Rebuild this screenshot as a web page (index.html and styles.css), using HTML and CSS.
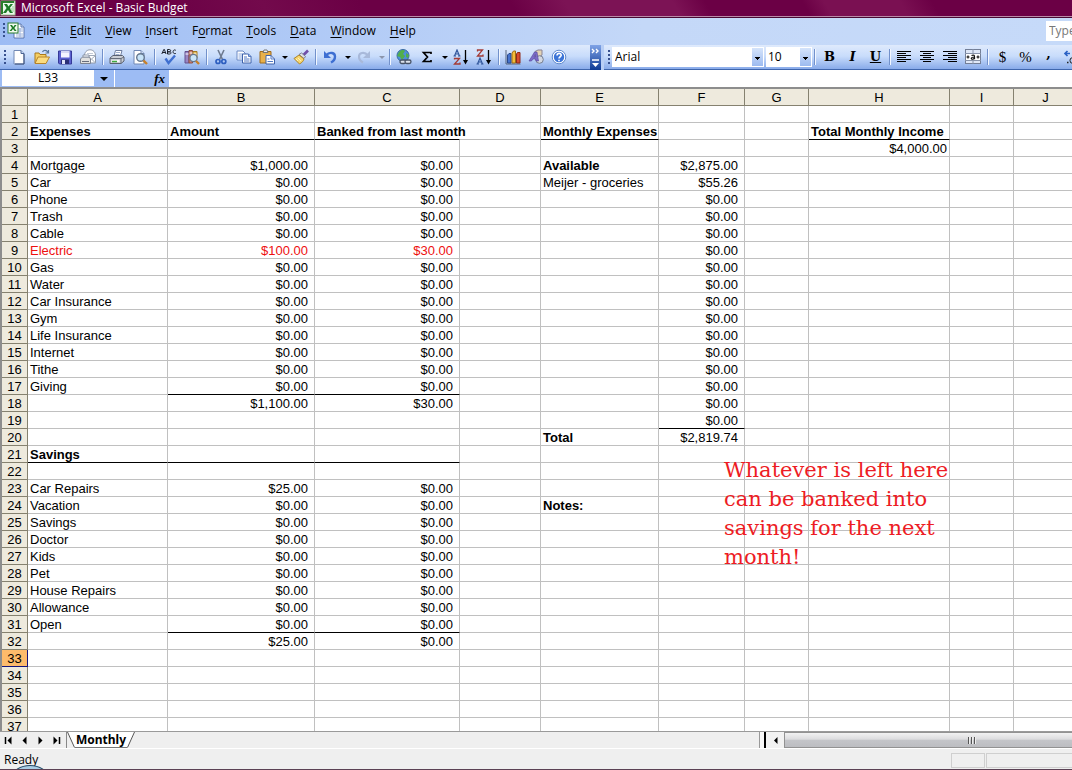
FILE: index.html
```html
<!DOCTYPE html>
<html lang="en">
<head>
<meta charset="utf-8">
<title>Microsoft Excel - Basic Budget</title>
<link rel="stylesheet" href="styles.css">
</head>
<body>
<header class="titlebar">
  <svg class="app-icon" width="16" height="16" viewBox="0 0 16 16" aria-hidden="true"><rect x="1" y="1" width="14" height="14" fill="#eef8ec" stroke="#9cc795"/><path d="M2 14V2h12" fill="none" stroke="#2c7d2c" stroke-width="2"/><path d="M4 4h3l1.500 2.500L10.500 4H13L9.800 8l3.200 5h-3l-2-3-2 3H3l3.600-5z" fill="#1d7a26"/><path d="M10 9h4M11 11h3M12 7h2" stroke="#8cc98c"/></svg>
  <h1>Microsoft Excel - Basic Budget</h1>
</header>

<nav class="menubar" aria-label="Menu">
  <span class="grip"></span>
  <svg class="doc-icon" width="18" height="17" viewBox="0 0 18 17" aria-hidden="true"><path d="M7 2h7l3 3v11H7z" fill="#fff" stroke="#5b77b0"/><path d="M14 2v3h3" fill="#cfdcf2" stroke="#5b77b0"/><path d="M11 7h5M11 9h5M9 12h7M9 14h7M13 6v9" stroke="#9db3dc"/><rect x="1" y="1" width="10" height="10" fill="#f1faef" stroke="#2a7d32"/><path d="M3 3h2l1.300 2L7.600 3h2L7.300 6l2.300 3h-2L6 7 4.500 9h-2L5 6z" fill="#1c7a26"/></svg>
  <button><u>F</u>ile</button>
  <button><u>E</u>dit</button>
  <button><u>V</u>iew</button>
  <button><u>I</u>nsert</button>
  <button>F<u>o</u>rmat</button>
  <button><u>T</u>ools</button>
  <button><u>D</u>ata</button>
  <button><u>W</u>indow</button>
  <button><u>H</u>elp</button>
  <input class="ask" type="text" aria-label="Help question" placeholder="Type a question for help">
</nav>

<div class="toolbars">
  <div class="toolbar standard" role="toolbar" aria-label="Standard">
    <span class="grip"></span>
    <button class="tool" aria-label="New"><svg viewBox="0 0 16 16"><path d="M3 1.500h7l3 3V15H3z" fill="#fff" stroke="#7088b4"/><path d="M10 1.500v3h3" fill="#c6d6f2" stroke="#4a6494"/><path d="M13 5v10H4" fill="none" stroke="#3a4f78"/></svg></button>
    <button class="tool" aria-label="Open"><svg viewBox="0 0 16 16"><path d="M1 14V4h4l1 1.500h6V8" fill="#f5cf62" stroke="#a9781c"/><path d="M1 14.500 4 8h11.500l-3.500 6.500z" fill="#fbdc80" stroke="#b7842a"/><path d="M8.500 3c1-2.300 4-2.300 5.500.2M14.500 1v3h-3" fill="none" stroke="#56769f" stroke-width="1.200"/></svg></button>
    <button class="tool" aria-label="Save"><svg viewBox="0 0 16 16"><path d="M1.500 2h13v13h-12l-1-1z" fill="#5b61cf" stroke="#363a98"/><rect x="4" y="2" width="8.500" height="6.500" fill="#f4f5ff"/><path d="M4 3h8.500" stroke="#b7bce8"/><rect x="4" y="10.500" width="8" height="4.500" fill="#2b2f75"/><rect x="5" y="11" width="3" height="4" fill="#dfe4f8"/></svg></button>
    <button class="tool" aria-label="E-mail"><svg viewBox="0 0 16 16"><path d="M4.500 14V6C5 2 8 .8 10 .8S15 2 15.500 6v8z" fill="#fff" stroke="#8b96a8"/><path d="M5 6.500h10.500l-4 3.500M15.500 14 11 9.500" fill="none" stroke="#a0abba"/><path d="M7 4.500h6" stroke="#c3cad6"/><path d="m.5 10 2-2h7l1 2v4.500H.5z" fill="#e1e1df" stroke="#7d8390"/><path d="M3 8h6V6H3z" fill="#fff" stroke="#8b96a8"/><path d="M2 12.500h7" stroke="#676d7c"/></svg></button>
    <span class="sep"></span>
    <button class="tool" aria-label="Print"><svg viewBox="0 0 16 16"><path d="m5 7 1.500-5.500H13L11.500 7z" fill="#fff" stroke="#6e7ea0"/><path d="M7 3.500h4M6.500 5.500h4" stroke="#9cadcb"/><path d="m1 9 3-2.500h9.500L15 8v4l-3 2.500H1z" fill="#cbcfd6" stroke="#596070"/><path d="M1 9.500h11L15 8M12 9.500v5" fill="none" stroke="#666d7a"/><path d="M2.500 11h8v2h-8z" fill="#f9f9f9"/><path d="M3 12.500h5" stroke="#3fa83f" stroke-width="1.500"/></svg></button>
    <button class="tool" aria-label="Print Preview"><svg viewBox="0 0 16 16"><path d="M2 1.500h7l3 3V15H2z" fill="#fff" stroke="#7088b4"/><path d="M9 1.500v3h3" fill="#d7e1f5" stroke="#7088b4"/><circle cx="8.500" cy="8.500" r="3.800" fill="#c9e5f9" stroke="#66788f" stroke-width="1.400"/><path d="m11.500 11.500 3.500 3.500" stroke="#c7812a" stroke-width="2.400"/></svg></button>
    <span class="sep"></span>
    <button class="tool" aria-label="Spelling"><svg viewBox="0 0 16 16"><path d="M.8 5 2.800.5h.6L5 5M1.500 3.500h3M6.500.5V5h2c2 0 2-2.200 0-2.200h-2 1.800c1.800 0 1.800-2.300 0-2.300zM14.800 1.300c-3-2-4.300 4.200 0 3.200" fill="none" stroke="#1d222d"/><path d="m4.500 9.500 3 4.500L14 6.500" fill="none" stroke="#3f6fd0" stroke-width="2.400"/></svg></button>
    <button class="tool" aria-label="Research"><svg viewBox="0 0 16 16"><path d="M1 2.500h4V14H1z" fill="#9a86c4" stroke="#63508d"/><path d="M5 1.500h3.500V14H5z" fill="#cf8376" stroke="#8c4d43"/><path d="M9 2.500h4V9H9z" fill="#e7bf61" stroke="#a37a22"/><path d="M1.500 5h3M5.500 4h3M9.500 5h3" stroke="#fff"/><circle cx="9.500" cy="9" r="3.600" fill="#c9e5f9" stroke="#66788f" stroke-width="1.300"/><path d="m12 12 3 3" stroke="#c7812a" stroke-width="2.400"/></svg></button>
    <span class="sep"></span>
    <button class="tool" aria-label="Cut"><svg viewBox="0 0 16 16"><path d="m5 1 4.500 9.500M11 1 6.500 10.500" stroke="#6d7a90" stroke-width="1.600"/><circle cx="5" cy="12.500" r="2" fill="none" stroke="#2e5fc0" stroke-width="1.700"/><circle cx="10.800" cy="12.500" r="2" fill="none" stroke="#2e5fc0" stroke-width="1.700"/></svg></button>
    <button class="tool" aria-label="Copy"><svg viewBox="0 0 16 16"><path d="M1 2h6l2 2v7H1z" fill="#fff" stroke="#6c8ac4"/><path d="M2.500 5h5M2.500 7h5M2.500 9h5" stroke="#8aa7dd"/><path d="M6.500 5h6l2.500 2.500V14H6.500z" fill="#fff" stroke="#3e62aa"/><path d="M12.500 5v2.500H15M8 8h3M8 10h5.500M8 12h5.500" fill="none" stroke="#5379c4"/></svg></button>
    <button class="tool" aria-label="Paste"><svg viewBox="0 0 16 16"><path d="M1 2.500h11V14H1z" fill="#e8b04a" stroke="#9d6a1c"/><path d="M4 3.500 5 1h3l1 2.500z" fill="#ececec" stroke="#767676"/><path d="M7 6.500h5L15.500 10v5H7z" fill="#fff" stroke="#3e62aa"/><path d="M12 6.500V10h3.500M8.500 10h2M8.500 12.500h5.500" fill="none" stroke="#5379c4"/></svg></button>
    <button class="drop" aria-label="Paste options"></button>
    <button class="tool" aria-label="Format Painter"><svg viewBox="0 0 16 16"><path d="M15 1.500 10.500 6" stroke="#704fa8" stroke-width="2.600"/><path d="m8.500 4 4 3.500-1.500 2-5-4z" fill="#dfe1e8" stroke="#777c91"/><path d="M6 6 1 9.500 6.500 15c2.500-1.500 4-3 4.500-5z" fill="#f6d66f" stroke="#ad8427"/><path d="m3 10 2 2M5 9l3 3" stroke="#fff2b5"/></svg></button>
    <span class="sep"></span>
    <button class="tool" aria-label="Undo"><svg viewBox="0 0 16 16"><path d="M4 6.500c4-4.500 9-2.500 9 1 0 3-2 5-4 6" fill="none" stroke="#3e6fd2" stroke-width="2.400"/><path d="M2 2v7h7z" fill="#3e6fd2"/></svg></button>
    <button class="drop" aria-label="Undo list"></button>
    <button class="tool" aria-label="Redo"><svg viewBox="0 0 16 16"><path d="M12 6.500c-4-4.500-9-2.500-9 1 0 3 2 5 4 6" fill="none" stroke="#a8b9da" stroke-width="2.200"/><path d="M14 2v7H7z" fill="#a8b9da"/></svg></button>
    <button class="drop dim" aria-label="Redo list"></button>
    <span class="sep"></span>
    <button class="tool" aria-label="Insert Hyperlink"><svg viewBox="0 0 16 16"><circle cx="7" cy="6.500" r="6" fill="#4d8fd9" stroke="#386a9f"/><path d="M3 3c3-3 5-2 6-1L7 5l2 2-3 4-2-3-3-1z" fill="#52ae4b"/><path d="m10 4 3 2-1 3-2-1z" fill="#52ae4b"/><rect x="4" y="11" width="6" height="3.500" rx="1.700" fill="#dce2ec" stroke="#485366" stroke-width="1.300"/><rect x="9" y="11" width="6" height="3.500" rx="1.700" fill="#dce2ec" stroke="#485366" stroke-width="1.300"/></svg></button>
    <button class="tool" aria-label="AutoSum"><svg viewBox="0 0 16 16"><path d="M12 5V3.500H4.500L8.500 8l-4 4.500H12V11" fill="none" stroke="#000" stroke-width="1.700"/></svg></button>
    <button class="drop" aria-label="AutoSum list"></button>
    <button class="tool" aria-label="Sort Ascending"><svg viewBox="0 0 16 16"><path d="M1.500 7 4 1l2.500 6M2.500 5h3M.5 7H3M5 7h2.500" fill="none" stroke="#31569c" stroke-width="1.200"/><path d="M1.500 10.500V9.500h5l-5 5.500h5.500v-1.500" fill="none" stroke="#a43a35" stroke-width="1.300"/><path d="M12.500 1v12" stroke="#000" stroke-width="1.300"/><path d="M10 11h5l-2.500 4.500z"/></svg></button>
    <button class="tool" aria-label="Sort Descending"><svg viewBox="0 0 16 16"><path d="M1.500 2.500V1h5l-5 6h5.500V5.500" fill="none" stroke="#a43a35" stroke-width="1.300"/><path d="M1.500 15 4 9l2.500 6M2.500 13h3M.5 15H3M5 15h2.500" fill="none" stroke="#31569c" stroke-width="1.200"/><path d="M12.500 1v12" stroke="#000" stroke-width="1.300"/><path d="M10 11h5l-2.500 4.500z"/></svg></button>
    <span class="sep"></span>
    <button class="tool" aria-label="Chart Wizard"><svg viewBox="0 0 16 16"><path d="M1 1v14h14.500" fill="none" stroke="#57657c"/><path d="M2.500 6 4 4.500h2V14H2.500z" fill="#4674ce" stroke="#29498c"/><path d="M7 4l1.500-2h2V14H7z" fill="#f4bd3b" stroke="#9c6d16"/><path d="m11.500 5 1-1.500h2.500V14h-3.500z" fill="#d84c2f" stroke="#8f2917"/></svg></button>
    <button class="tool" aria-label="Drawing"><svg viewBox="0 0 16 16"><path d="m7 2.500 3-1.500h4v5l-3 2H7z" fill="#e3d3b4" stroke="#8b8494"/><circle cx="11.500" cy="10.500" r="3.800" fill="#d3d8e2" stroke="#777f90"/><path d="M1 12 6.500 3H9l1.500 9H8l-.4-2H4.800L3.500 12zM6 8h1.500L7.300 5.500z" fill="#7c6cc8" stroke="#54459a" stroke-width=".6"/></svg></button>
    <button class="tool" aria-label="Help"><svg viewBox="0 0 16 16"><circle cx="8" cy="8" r="6.800" fill="#fff" stroke="#5d88cc"/><circle cx="8" cy="8" r="5.200" fill="#3b74d7"/><path d="M6 6.500c0-3 4.300-2.600 4.200-.2C10.200 7.800 8 7.700 8 9.500M8 10.700v1.600" fill="none" stroke="#fff" stroke-width="1.600"/></svg></button>
    <button class="more" aria-label="Toolbar options"><svg width="9" height="22" viewBox="0 0 9 22"><path d="m1 3 2 2-2 2M5 3l2 2-2 2M1 14h7" fill="none" stroke="#fff" stroke-width="1.400"/><path d="M1 17h7l-3.500 4z" fill="#fff"/></svg></button>
  </div>
  <div class="toolbar formatting" role="toolbar" aria-label="Formatting">
    <span class="grip"></span>
    <span class="combo font"><select aria-label="Font"><option>Arial</option></select></span>
    <span class="combo size"><select aria-label="Font size"><option>10</option></select></span>
    <span class="sep"></span>
    <button class="tool letter">B</button>
    <button class="tool letter italic">I</button>
    <button class="tool letter under">U</button>
    <span class="sep"></span>
    <button class="tool" aria-label="Align Left"><svg viewBox="0 0 16 16"><path d="M1 2.500h14M1 4.500h9M1 6.500h14M1 8.500h9M1 10.500h14M1 12.500h9" stroke="#000"/></svg></button>
    <button class="tool" aria-label="Center"><svg viewBox="0 0 16 16"><path d="M1 2.500h14M4 4.500h8M1 6.500h14M4 8.500h8M1 10.500h14M4 12.500h8" stroke="#000"/></svg></button>
    <button class="tool" aria-label="Align Right"><svg viewBox="0 0 16 16"><path d="M1 2.500h14M6 4.500h9M1 6.500h14M6 8.500h9M1 10.500h14M6 12.500h9" stroke="#000"/></svg></button>
    <button class="tool" aria-label="Merge and Center"><svg viewBox="0 0 16 16"><rect x=".5" y=".5" width="15" height="14" fill="#dfe8f8" stroke="#737f97"/><path d="M0 4.500h16M0 11.500h16M8 0v4M8 11v4" stroke="#8793aa"/><path d="M1 5h14v6H1z" fill="#fff"/><path d="M1.500 8h3M3 6.500v3M14.500 8h-3M13 6.500v3M6.500 6.500c2.500-1 3 0 3 1.500v2.200M9.500 8c-4-.2-4 2.500-1.500 2.200l1.500-1" fill="none" stroke="#111" stroke-width="1.200"/></svg></button>
    <span class="sep"></span>
    <button class="tool letter plain">$</button>
    <button class="tool letter plain">%</button>
    <button class="tool letter comma">,</button>
    <button class="tool" aria-label="Increase Decimal"><svg viewBox="0 0 16 16"><path d="M7 4.500H2M4.500 2 2 4.500 4.500 7" fill="none" stroke="#2c62c4" stroke-width="1.700"/><path d="M4 13.500h1.500" stroke="#222" stroke-width="1.500"/><ellipse cx="9" cy="11.500" rx="2" ry="2.700" fill="none" stroke="#222"/></svg></button>
  </div>
</div>

<div class="formulabar">
  <input class="namebox" type="text" aria-label="Name box" value="L33">
  <button class="namedrop" aria-label="Names"></button>
  <button class="fx">fx</button>
  <input class="formula" type="text" aria-label="Formula">
</div>

<main class="sheet">
<table class="grid">
<colgroup><col class="w-head"><col class="w-a"><col class="w-b"><col class="w-c"><col class="w-d"><col class="w-e"><col class="w-f"><col class="w-g"><col class="w-h"><col class="w-i"><col class="w-j"></colgroup>
<thead><tr><th></th><th>A</th><th>B</th><th>C</th><th>D</th><th>E</th><th>F</th><th>G</th><th>H</th><th>I</th><th>J</th></tr></thead>
<tbody>
<tr><th>1<td><td><td><td><td><td><td><td><td><td></tr>
<tr class="heads"><th>2<td class="line">Expenses<td class="line">Amount<td class="line spill">Banked from last month<td><td class="line">Monthly Expenses<td><td><td class="line">Total Monthly Income<td><td></tr>
<tr><th>3<td><td><td><td><td><td><td><td class="num flush">$4,000.00<td><td></tr>
<tr><th>4<td>Mortgage<td class="num">$1,000.00<td class="num">$0.00<td><td class="strong">Available<td class="num">$2,875.00<td><td><td><td></tr>
<tr><th>5<td>Car<td class="num">$0.00<td class="num">$0.00<td><td>Meijer - groceries<td class="num">$55.26<td><td><td><td></tr>
<tr><th>6<td>Phone<td class="num">$0.00<td class="num">$0.00<td><td><td class="num">$0.00<td><td><td><td></tr>
<tr><th>7<td>Trash<td class="num">$0.00<td class="num">$0.00<td><td><td class="num">$0.00<td><td><td><td></tr>
<tr><th>8<td>Cable<td class="num">$0.00<td class="num">$0.00<td><td><td class="num">$0.00<td><td><td><td></tr>
<tr><th>9<td class="red">Electric<td class="num red">$100.00<td class="num red">$30.00<td><td><td class="num">$0.00<td><td><td><td></tr>
<tr><th>10<td>Gas<td class="num">$0.00<td class="num">$0.00<td><td><td class="num">$0.00<td><td><td><td></tr>
<tr><th>11<td>Water<td class="num">$0.00<td class="num">$0.00<td><td><td class="num">$0.00<td><td><td><td></tr>
<tr><th>12<td>Car Insurance<td class="num">$0.00<td class="num">$0.00<td><td><td class="num">$0.00<td><td><td><td></tr>
<tr><th>13<td>Gym<td class="num">$0.00<td class="num">$0.00<td><td><td class="num">$0.00<td><td><td><td></tr>
<tr><th>14<td>Life Insurance<td class="num">$0.00<td class="num">$0.00<td><td><td class="num">$0.00<td><td><td><td></tr>
<tr><th>15<td>Internet<td class="num">$0.00<td class="num">$0.00<td><td><td class="num">$0.00<td><td><td><td></tr>
<tr><th>16<td>Tithe<td class="num">$0.00<td class="num">$0.00<td><td><td class="num">$0.00<td><td><td><td></tr>
<tr><th>17<td>Giving<td class="num line">$0.00<td class="num line">$0.00<td><td><td class="num">$0.00<td><td><td><td></tr>
<tr><th>18<td><td class="num">$1,100.00<td class="num">$30.00<td><td><td class="num">$0.00<td><td><td><td></tr>
<tr><th>19<td><td><td><td><td><td class="num line">$0.00<td><td><td><td></tr>
<tr><th>20<td><td><td><td><td class="strong">Total<td class="num">$2,819.74<td><td><td><td></tr>
<tr><th>21<td class="strong line">Savings<td class="line"><td class="line"><td><td><td><td><td><td><td></tr>
<tr><th>22<td><td><td><td><td><td><td><td><td><td></tr>
<tr><th>23<td>Car Repairs<td class="num">$25.00<td class="num">$0.00<td><td><td><td><td><td><td></tr>
<tr><th>24<td>Vacation<td class="num">$0.00<td class="num">$0.00<td><td class="strong">Notes:<td><td><td><td><td></tr>
<tr><th>25<td>Savings<td class="num">$0.00<td class="num">$0.00<td><td><td><td><td><td><td></tr>
<tr><th>26<td>Doctor<td class="num">$0.00<td class="num">$0.00<td><td><td><td><td><td><td></tr>
<tr><th>27<td>Kids<td class="num">$0.00<td class="num">$0.00<td><td><td><td><td><td><td></tr>
<tr><th>28<td>Pet<td class="num">$0.00<td class="num">$0.00<td><td><td><td><td><td><td></tr>
<tr><th>29<td>House Repairs<td class="num">$0.00<td class="num">$0.00<td><td><td><td><td><td><td></tr>
<tr><th>30<td>Allowance<td class="num">$0.00<td class="num">$0.00<td><td><td><td><td><td><td></tr>
<tr><th>31<td>Open<td class="num line">$0.00<td class="num line">$0.00<td><td><td><td><td><td><td></tr>
<tr><th>32<td><td class="num">$25.00<td class="num">$0.00<td><td><td><td><td><td><td></tr>
<tr><th class="current">33<td><td><td><td><td><td><td><td><td><td></tr>
<tr><th>34<td><td><td><td><td><td><td><td><td><td></tr>
<tr><th>35<td><td><td><td><td><td><td><td><td><td></tr>
<tr><th>36<td><td><td><td><td><td><td><td><td><td></tr>
<tr><th>37<td><td><td><td><td><td><td><td><td><td></tr>
</tbody>
</table>
<p class="note">Whatever is left here<br>can be banked into<br>savings for the next<br>month!</p>
</main>

<div class="tabrow">
  <button class="step" aria-label="First sheet"><svg viewBox="0 0 9 9"><path d="M1.500 1v7" stroke="#000" stroke-width="1.500"/><path d="M7.500.5v8l-4-4z"/></svg></button>
  <button class="step" aria-label="Previous sheet"><svg viewBox="0 0 9 9"><path d="M6.500.5v8l-4-4z"/></svg></button>
  <button class="step" aria-label="Next sheet"><svg viewBox="0 0 9 9"><path d="M2.500.5v8l4-4z"/></svg></button>
  <button class="step" aria-label="Last sheet"><svg viewBox="0 0 9 9"><path d="M7.500 1v7" stroke="#000" stroke-width="1.500"/><path d="M1.500.5v8l4-4z"/></svg></button>
  <div class="tabs">
    <svg class="edge" width="8" height="16" viewBox="0 0 8 16" aria-hidden="true"><path d="M0 0h8v15.500H7.500z" fill="#fff"/><path d="M.5 0 7.500 15.500" stroke="#555"/></svg>
    <button class="tab">Monthly</button>
    <svg class="edge" width="8" height="16" viewBox="0 0 8 16" aria-hidden="true"><path d="M8 0H0v15.500z" fill="#fff"/><path d="M7.500 0 .5 15.500" stroke="#555"/></svg>
  </div>
  <span class="filler"></span>
  <span class="splitter"></span>
  <div class="scroll">
    <button class="arrow" aria-label="Scroll left"><svg viewBox="0 0 9 9"><path d="M6.500 1v7L3 4.500z"/></svg></button>
    <span class="thumb"><i></i><i></i><i></i></span>
  </div>
</div>
<footer class="status">
  <span class="ready">Ready</span>
  <span class="panel small"></span>
  <span class="panel wide"></span>
  <span class="orb"></span>
</footer>
</body>
</html>
```
FILE: styles.css
```css
* { box-sizing: border-box; }
body {
  margin: 0;
  height: 100vh;
  display: flex;
  flex-direction: column;
  overflow: hidden;
  background: #efefef;
  color: #000;
  font: 12px/16px "Open Sans", "Noto Sans", sans-serif;
}
button {
  margin: 0;
  padding: 0;
  border: 0;
  background: none;
  color: inherit;
  font: inherit;
}
input, select { border: 0; border-radius: 0; outline: 0; margin: 0; font: inherit; color: inherit; }

.titlebar {
  flex: none;
  display: flex;
  align-items: center;
  gap: 5px;
  height: 18px;
  padding-bottom: 2px;
  border-bottom: 1px solid #470a33;
  box-shadow: inset 0 -1px #b98aa8;
  background: linear-gradient(60deg, #6b0045 0 15%, #730a4c 25%, #6b0045 34% 48%, #7c1355 53% 63%, #6b0045 66% 75%, #7a1052 77% 84%, #6b0045 87%);
  color: #fff;
}
.titlebar h1 { margin: 0; font-size: 12px; line-height: 16px; font-weight: 400; }

.menubar {
  flex: none;
  display: flex;
  align-items: center;
  height: 27px;
  padding-bottom: 2px;
  overflow: hidden;
  background: linear-gradient(90deg, #9dbcf4, #c4d8f8 60%, #c6daf9);
}
.menubar .grip { margin-left: 3px; }
.doc-icon { flex: none; margin-right: 5px; }
.menubar button { flex: none; height: 22px; padding: 0 7px; }
.menubar u { text-underline-offset: 2px; }
.ask {
  flex: none;
  width: 160px;
  height: 20px;
  margin: 0 -134px 0 auto;
  padding: 0 3px;
  background: #fff;
}
.ask::placeholder { color: #777; opacity: 1; }

.grip {
  flex: none;
  width: 2px;
  height: 15px;
  margin: 0 2px;
  background: repeating-linear-gradient(#37508e 0 2px, transparent 2px 4px);
}

.toolbars { flex: none; display: flex; gap: 3px; height: 25px; overflow: hidden; background: #b9cff5; }
.toolbar {
  flex: none;
  display: flex;
  align-items: center;
  padding-bottom: 1px;
  background: linear-gradient(#dfeafc, #c8dcfb 45%, #8aacea 95%, #3f66ad 96%);
}
.standard { width: 601px; padding-left: 2px; }
.formatting { flex: 1 0 480px; padding-left: 2px; }
.tool { flex: none; display: grid; place-items: center; width: 23px; height: 22px; padding-right: 1px; }
.tool svg { width: 16px; height: 16px; }
.drop { flex: none; width: 11px; height: 22px; display: grid; place-items: center; }
.drop::before, .namedrop::before {
  content: "";
  border: 3px solid transparent;
  border-top-color: #000;
  border-bottom: 0;
}
.drop.dim::before { border-top-color: #8b95ab; }
.sep {
  flex: none;
  width: 2px;
  height: 16px;
  margin: 0 2px;
  background: linear-gradient(90deg, #7291cb 0 1px, #f2f7ff 1px);
}
.more {
  width: 11px;
  height: 25px;
  margin-left: auto;
  padding: 0 1px;
  display: grid;
  place-items: center;
  background: linear-gradient(#7fa3e6, #0e3a94);
}
.combo { flex: none; position: relative; height: 20px; margin-right: 2px; background: #fff; }
.combo select { appearance: none; width: 100%; height: 20px; padding: 0 3px; background: none; line-height: 16px; }
.combo::after {
  content: "";
  position: absolute;
  top: 1px;
  right: 1px;
  width: 11px;
  height: 18px;
  background: linear-gradient(#000, #000) 50% 9px / 5px 1px no-repeat, linear-gradient(#000, #000) 50% 10px / 3px 1px no-repeat, linear-gradient(#000, #000) 50% 11px / 1px 1px no-repeat, linear-gradient(#d5e4fb, #9dbbf0);
  pointer-events: none;
}
.combo.font { width: 152px; }
.combo.size { width: 46px; margin-right: 0; }
.combo.size select { padding: 0 2px; }
.letter { padding: 0; font: bold 13px/20px "DejaVu Serif", serif; }
.italic { font-style: italic; }
.under { text-decoration: underline; }
.plain { font: 15px/20px "Liberation Serif", serif; }
.comma { align-items: start; line-height: 16px; }

.formulabar { flex: none; display: flex; height: 17px; padding-left: 2px; background: #9dbcf4; }
.namebox { width: 92px; height: 16px; padding: 0; background: #fff; text-align: center; }
.namedrop { display: grid; place-items: center; width: 21px; height: 17px; border-right: 1px solid #fff; }
.namedrop::before { border-width: 4px 4px 0; }
.fx { width: 54px; padding-right: 4px; text-align: right; font: italic bold 13px/16px "Liberation Serif", serif; }
.formula { flex: 1; min-width: 0; padding: 0 4px; background: #fff; }

.sheet {
  flex: 1;
  min-height: 0;
  position: relative;
  overflow: hidden;
  border: solid #8d8d8d;
  border-width: 2px 0 0 2px;
  background: #fff;
}
.grid {
  width: 1076px;
  min-width: 100%;
  table-layout: fixed;
  border-collapse: separate;
  border-spacing: 0;
  font: 13px/15px "Liberation Sans", Arial, sans-serif;
}
.w-head { width: 26px; }
.w-a { width: 140px; }
.w-b { width: 147px; }
.w-c { width: 145px; }
.w-d { width: 81px; }
.w-e { width: 118px; }
.w-f { width: 86px; }
.w-g { width: 64px; }
.w-h { width: 141px; }
.w-i { width: 64px; }
.w-j { width: 64px; }
.grid th {
  height: 17px;
  padding: 1px 0 0;
  border: solid #85816f;
  border-width: 0 1px 1px 0;
  background: #eeeadd;
  font-weight: 400;
  text-align: center;
}
.grid td {
  height: 17px;
  padding: 1px 2px 0;
  border: solid #c0c0c0;
  border-width: 0 1px 1px 0;
  white-space: nowrap;
}
.grid .num { padding-right: 6px; text-align: right; }
.grid .flush { padding-right: 2px; }
.grid .red { color: #ee1010; }
.grid .strong, .grid .heads td { font-weight: 700; }
.grid .line { border-bottom-color: #000; }
.grid .spill { border-right-color: transparent; }
.grid .current { background: #fdbb6b; border-color: #13137a; }

.note {
  position: absolute;
  left: 722px;
  top: 367px;
  margin: 0;
  color: #ed1c24;
  font: 300 21px/29px "DejaVu Serif", serif;
}

.tabrow { flex: none; display: flex; height: 17px; border-top: 1px solid #9a9a9a; }
.step { display: grid; place-items: center; width: 16px; height: 16px; }
.step:last-of-type { margin-right: 2px; }
.step svg, .arrow svg { width: 9px; height: 9px; }
.tabs { display: flex; border-left: 1px solid #888; }
.tab { height: 16px; padding: 0 1px; background: #fff; border-bottom: 1px solid #777; font: bold 12px/15px "Noto Sans", sans-serif; }
.filler { flex: 1; }
.splitter { width: 7px; border: solid #999; border-width: 0 2px 0 1px; border-right-color: #000; background: #f8f8f8; }
.scroll { flex: none; width: 28.500%; display: flex; }
.arrow { width: 18px; display: grid; place-items: center; background: #f2f2f2; }
.thumb {
  flex: 1;
  display: flex;
  justify-content: center;
  align-items: center;
  gap: 1px;
  padding-left: 86px;
  border: 1px solid #929292;
  border-right: 0;
  background: linear-gradient(#f2f2f2, #dcdcde 45%, #c4c5c9 50%, #bcbdc1);
}
.thumb i { width: 2px; height: 7px; background: linear-gradient(90deg, #555 1px, #eee 1px); }

.status {
  flex: none;
  position: relative;
  display: flex;
  align-items: center;
  gap: 1px;
  height: 22px;
  border-top: 1px solid #fff;
  border-bottom: 1px solid #5b4154;
  padding: 2px 0 0 4px;
  overflow: hidden;
}
.ready { flex: 1; }
.panel { height: 15px; border: 1px solid #cfcfcf; }
.small { width: 34px; }
.wide { width: 86px; border-right: 0; }
.orb {
  position: absolute;
  left: 12px;
  bottom: -20px;
  width: 36px;
  height: 24px;
  border: 1px solid #234a66;
  border-radius: 50%;
  background: #a9cde4;
}
```
